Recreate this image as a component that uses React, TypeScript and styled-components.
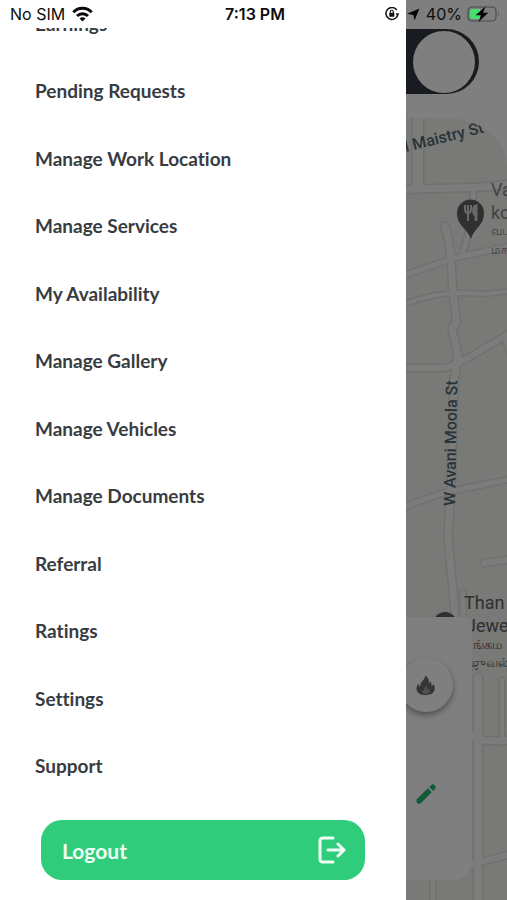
import React from "react";
import styled, { createGlobalStyle } from "styled-components";

const GlobalStyle = createGlobalStyle`
  *, *::before, *::after { box-sizing: border-box; }
  body { margin: 0; background: #fff; font-family: Lato, "Noto Sans", sans-serif; font-variant-ligatures: none; }
  button { font: inherit; border: 0; padding: 0; cursor: pointer; }
`;

const Screen = styled.div`
  position: relative;
  display: grid;
  grid-template-columns: 4fr 1fr;
  height: 100vh;
  min-height: 640px;
  overflow: hidden;
`;

const StatusBar = styled.header`
  position: absolute;
  inset: 0 0 auto;
  z-index: 3;
  display: grid;
  grid-template-columns: 1fr auto 1fr;
  align-items: center;
  height: 28px;
  padding: 0 7px 0 10px;
  color: #0c0c0c;
  font: 400 16px/20px Inter, sans-serif;
`;

const StatusGroup = styled.div<{ $end?: boolean }>`
  display: flex;
  align-items: center;
  justify-content: ${(p) => (p.$end ? "flex-end" : "flex-start")};
  gap: ${(p) => (p.$end ? "5px" : "7px")};
`;

const Time = styled.time`
  font-size: 16px;
  font-weight: 600;
`;

const Drawer = styled.aside`
  display: flex;
  flex-direction: column;
  min-height: 0;
  padding-top: 28px;
  background: #fff;
`;

const MenuScroll = styled.nav`
  display: flex;
  flex: 1;
  min-height: 0;
  overflow: hidden;
`;

const MenuList = styled.ul`
  display: grid;
  flex: 1;
  grid-auto-rows: 1fr;
  margin: -38px 0 0;
  padding: 0;
  list-style: none;
`;

const MenuItem = styled.li`
  display: flex;
`;

const MenuLink = styled.a`
  display: flex;
  flex: 1;
  align-items: center;
  padding: 0 35px;
  color: #383c42;
  font-size: 19px;
  font-weight: 700;
  line-height: 24px;
  text-decoration: none;
`;

const DrawerFooter = styled.footer`
  display: flex;
  padding: 20px 41px;
`;

const LogoutButton = styled.button`
  display: flex;
  flex: 1;
  align-items: center;
  justify-content: space-between;
  height: 60px;
  padding: 0 19px 0 21px;
  border-radius: 21px;
  background: #2fcc7c;
  color: #f0fff6;
  && { font-size: 21px; font-weight: 700; }
`;

const Home = styled.main`
  position: relative;
  display: flex;
  flex-direction: column;
  min-width: 0;
  overflow: hidden;
  background: #fff;
`;

const TopBar = styled.div`
  display: flex;
  height: 118px;
  padding-top: 29px;
`;

const Switch = styled.input`
  appearance: none;
  display: flex;
  align-items: center;
  justify-content: flex-end;
  width: 73px;
  height: 65px;
  margin: 0;
  padding-right: 4px;
  border-radius: 0 33px 33px 0;
  background: #30363f;
  &::before {
    content: "";
    width: 62px;
    height: 62px;
    border-radius: 50%;
    background: #fff;
  }
`;

const MapArea = styled.section`
  position: relative;
  flex: 1;
  overflow: hidden;
  background: #f2f2ee;
  border-top-right-radius: 60px 48px;
`;

const MapDrawing = styled.svg`
  display: block;
  width: 101px;
  height: 782px;
`;

const Sheet = styled.div`
  position: absolute;
  inset: auto 35px 20px 0;
  height: 263px;
  border-radius: 0 8px 20px 0;
  background: #fff;
`;

const SheetActions = styled.div`
  display: flex;
  flex-direction: column;
  align-items: flex-start;
  gap: 70px;
  padding-top: 41px;
`;

const HotButton = styled.button`
  display: grid;
  place-items: center;
  width: 54px;
  height: 54px;
  margin-left: -7px;
  border-radius: 50%;
  background: #fff;
  box-shadow: 0 3px 6px #0006;
`;

const EditButton = styled.button`
  display: grid;
  place-items: center;
  width: 24px;
  height: 24px;
  margin-left: 8px;
  background: none;
`;

const Scrim = styled.button`
  position: absolute;
  inset: 0;
  z-index: 2;
  background: #00000080;
`;

const items = [
  "Earnings",
  "Pending Requests",
  "Manage Work Location",
  "Manage Services",
  "My Availability",
  "Manage Gallery",
  "Manage Vehicles",
  "Manage Documents",
  "Referral",
  "Ratings",
  "Settings",
  "Support",
];

const roads = [
  { d: "M12 0V70", w: 10 },
  { d: "M-4 72C30 68 60 73 105 66", w: 7 },
  { d: "M67 70V92Q64 113 56 137", w: 5 },
  { d: "M-4 158L48 140L105 128", w: 5 },
  { d: "M39 108C46 130 45 150 47 174L50 198V205L46 210L52 238L48 262L45 370L42 418L55 560", w: 7 },
  { d: "M-4 187C30 174 50 174 76 176L105 173", w: 4 },
  { d: "M-4 250H36C50 250 80 228 105 215", w: 6 },
  { d: "M98 218L105 240", w: 4 },
  { d: "M-4 390Q30 376 46 373L105 361", w: 5 },
  { d: "M78 445L105 441", w: 6 },
  { d: "M57 475V505Q65 512 105 507", w: 5 },
  { d: "M72 560V782", w: 8 },
  { d: "M96 562V625", w: 4 },
  { d: "M65 617Q72 625 105 622", w: 7 },
  { d: "M105 736L62 747", w: 6 },
  { d: "M27 760V782", w: 5 },
];

const WifiIcon = () => (
  <svg width="21" height="17" viewBox="0 0 21 17" fill="none" stroke="#080808" strokeWidth="3" aria-label="Wi-Fi">
    <path d="M1.3 6.2C6.5 1 14.5 1 19.7 6.2" />
    <path d="M5 10C8 7 13 7 16 10" />
    <path d="m10.5 15.6-3-3.1c1.7-1.6 4.3-1.6 6 0z" fill="#080808" stroke="none" />
  </svg>
);

const LockIcon = () => (
  <svg width="15" height="14" viewBox="0 0 15 14" fill="none" stroke="#111" aria-label="Rotation lock">
    <path d="M11.8 3A6 6 0 1 0 12.6 8.5" strokeWidth="1.5" />
    <path d="m10.8 6.3 3.6.2-2 3.2z" fill="#111" stroke="none" />
    <path d="M5.2 6V4.9a1.6 1.6 0 0 1 3.2 0V6" strokeWidth="1.1" />
    <rect x="4.3" y="5.8" width="5" height="4" rx=".6" fill="#111" stroke="none" />
  </svg>
);

const LocationIcon = () => (
  <svg width="16" height="13" viewBox="0 0 16 13" fill="#080808" aria-label="Location">
    <path d="M14.500.5 9.500 12.500 8.300 6.900 2 5.800z" />
  </svg>
);

const BatteryIcon = () => (
  <svg width="33" height="18" viewBox="0 0 33 18" aria-label="Charging">
    <rect x="1" y="2" width="28" height="14" rx="4" fill="none" stroke="#4b4b4b" strokeWidth="1.2" />
    <path d="M3 6q0-2 2-2h8v10H5q-2 0-2-2z" fill="#44df6c" />
    <path d="M31 6.5q1.8 2.5 0 5z" fill="#4b4b4b" />
    <path d="M18.5 1.5 8.5 10.3h5.5L11.5 17l9.8-9.2h-5.2z" fill="#050505" />
  </svg>
);

const LogoutIcon = () => (
  <svg width="28" height="28" viewBox="0 0 28 28" fill="none" stroke="#effff5" strokeWidth="3" strokeLinecap="round" strokeLinejoin="round" aria-hidden="true">
    <path d="M15 2H5Q2 2 2 5V23Q2 26 5 26H15" />
    <path d="M10 14H26M20 8 26 14 20 20" />
  </svg>
);

const FireIcon = () => (
  <svg width="20" height="21" viewBox="0 0 20 21" aria-hidden="true">
    <path d="M10 20C4 20 .2 17.500.5 13.500c.1-2 1-4 2.200-5 .1 2 .6 2.800 1.300 3.300C4 6.800 8.600 5.500 9.300.5c3 2.300 4.200 5 3.600 8 .8-.4 1.300-1.200 1.500-2.200 1 1.200 1.200 2.800 1 4.600 1-.4 1.600-1.100 1.900-2C21 15 17.500 20 10 20z" fill="#6a6a6a" />
    <path d="M10 19c-3 0-4.500-2-3.700-4.500.5 1 1 1.300 1.500 1.300-.4-2.500 1.500-3.200 2-5.300 1.800 1.500 1.700 3 1.500 4.200.8-.1 1.300-.6 1.700-1.400C15 16 13.500 19 10 19z" fill="#a0a0a0" />
  </svg>
);

const PencilIcon = () => (
  <svg width="22" height="22" viewBox="0 0 22 22" fill="#23b46c" aria-hidden="true">
    <path d="M1.500 16.500 12.800 5.300l3.900 3.900L5.500 20.500q-4.500 1.200-4-4z" />
    <path d="m14.300 4 2.200-2.200q1.400-1.200 2.700 0l1.100 1.200q1.200 1.300 0 2.700l-2.100 2.200z" />
  </svg>
);

const MapView = () => (
  <MapDrawing viewBox="0 0 101 782" role="img" aria-label="Map">
    <g fill="none" strokeLinejoin="round" strokeLinecap="round">
      {roads.map((r) => <path key={r.d} d={r.d} stroke="#e0e0de" strokeWidth={r.w + 3} />)}
      {roads.map((r) => <path key={r.d} d={r.d} stroke="#f8f8f7" strokeWidth={r.w} />)}
    </g>
    <g fontFamily="Roboto, sans-serif" fill="#536970" fontSize="16" fontWeight="500">
      <text transform="translate(0 34) rotate(-14)">l Maistry St</text>
      <text transform="translate(49 388) rotate(-89)">W Avani Moola St</text>
    </g>
    <g fontFamily="Roboto, sans-serif" fontSize="18">
      <g fill="#858585">
        <text x="85" y="78">Va</text>
        <text x="85" y="101">ko</text>
        <text x="85" y="117" fontSize="12">வட</text>
        <text x="85" y="136" fontSize="12">மா</text>
      </g>
      <g fill="#606060">
        <text x="58" y="491">Than</text>
        <text x="60" y="514">Jewe</text>
        <text x="67" y="531" fontSize="13">ங்கம</text>
        <text x="62" y="549" fontSize="13">ஜுவல்</text>
      </g>
    </g>
    <path d="M65 121C61 110 51 108 51 95a13.500 13.500 0 0 1 27 0C78 108 68 110 65 121z" fill="#606060" />
    <g fill="none" stroke="#d2d2d0" strokeWidth="2">
      <path d="M59 87v4q0 4 3 4t3-4v-4M62 87v16" />
      <path d="M70 103V88c-3 1-3 6-1 9" strokeWidth="3" />
    </g>
    <circle cx="39" cy="506" r="12" fill="#606060" />
  </MapDrawing>
);

export default function App() {
  return (
    <>
      <GlobalStyle />
      <Screen>
        <StatusBar>
          <StatusGroup>
            <span>No SIM</span>
            <WifiIcon />
          </StatusGroup>
          <Time>7:13 PM</Time>
          <StatusGroup $end>
            <LockIcon />
            <LocationIcon />
            <span>40%</span>
            <BatteryIcon />
          </StatusGroup>
        </StatusBar>
        <Drawer>
          <MenuScroll aria-label="Main menu">
            <MenuList>
              {items.map((label) => (
                <MenuItem key={label}>
                  <MenuLink href="#">{label}</MenuLink>
                </MenuItem>
              ))}
            </MenuList>
          </MenuScroll>
          <DrawerFooter>
            <LogoutButton type="button">
              Logout
              <LogoutIcon />
            </LogoutButton>
          </DrawerFooter>
        </Drawer>
        <Home>
          <TopBar>
            <Switch type="checkbox" role="switch" aria-label="Online" defaultChecked />
          </TopBar>
          <MapArea>
            <MapView />
            <Sheet>
              <SheetActions>
                <HotButton type="button" aria-label="Hot areas"><FireIcon /></HotButton>
                <EditButton type="button" aria-label="Edit"><PencilIcon /></EditButton>
              </SheetActions>
            </Sheet>
          </MapArea>
          <Scrim type="button" aria-label="Close menu" />
        </Home>
      </Screen>
    </>
  );
}
